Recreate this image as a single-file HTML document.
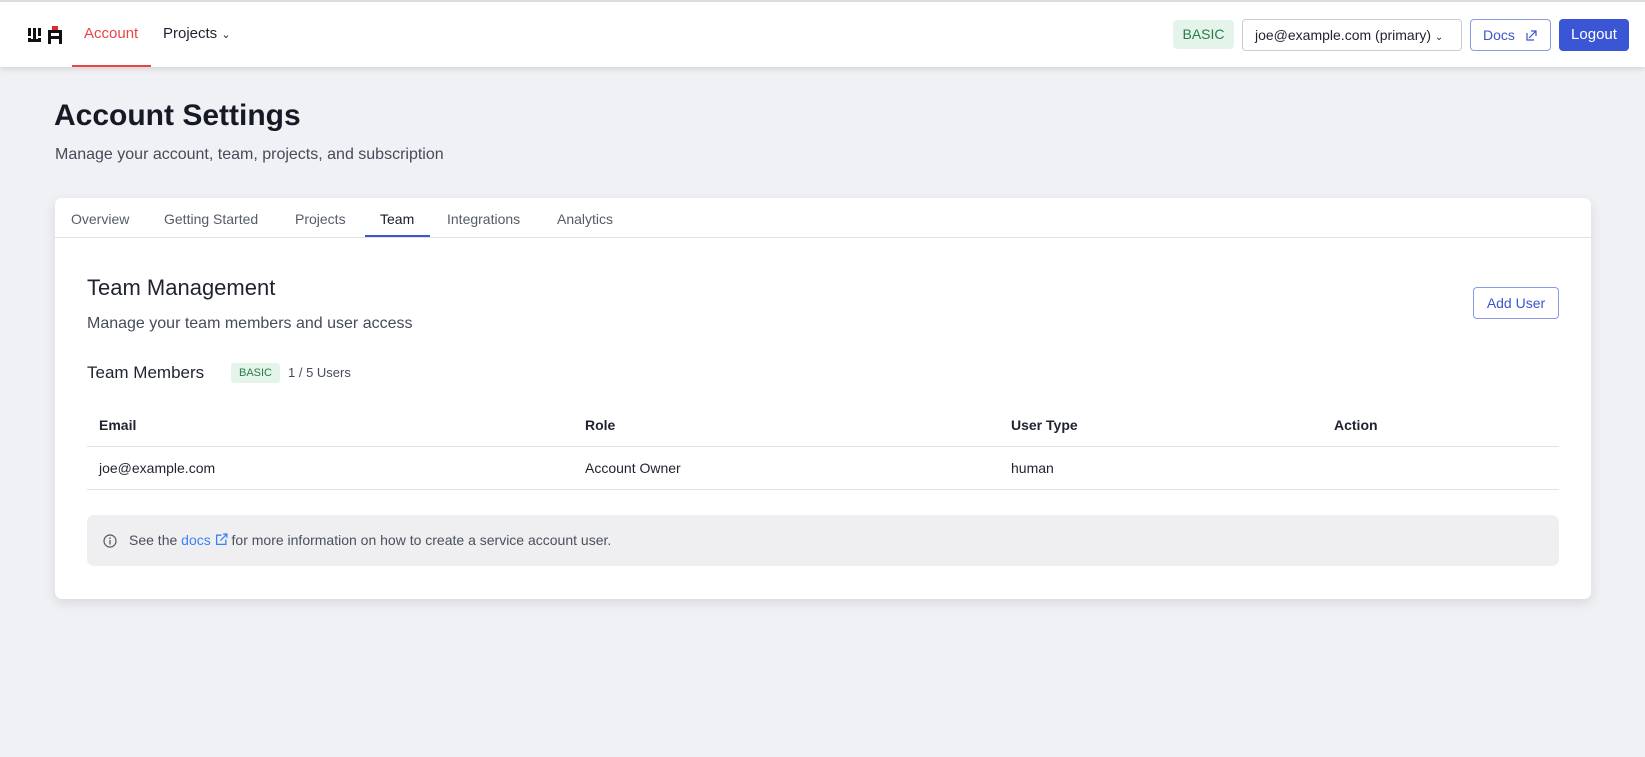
<!DOCTYPE html>
<html><head><meta charset="utf-8"><style>
*{box-sizing:border-box;margin:0;padding:0}
body{width:1645px;height:757px;background:#f0f1f4;font-family:"Liberation Sans",sans-serif;color:#1f2330;position:relative;overflow:hidden}
.abs{position:absolute}
header{position:absolute;left:0;top:0;width:1645px;height:67px;background:#fff;border-top:2px solid #dcdcdc;box-shadow:0 2px 5px rgba(0,0,0,.12)}
.t{position:absolute;white-space:nowrap}
.card{position:absolute;left:55px;top:198px;width:1536px;height:401px;background:#fff;border-radius:7px;box-shadow:0 4px 12px rgba(0,0,0,.1)}
</style></head><body>
<header>
<svg class="abs" style="left:27px;top:23px" width="36" height="20" viewBox="0 0 36 20">
<g fill="#111"><rect x="1" y="3" width="3" height="8"/><rect x="1" y="13" width="3" height="4"/><rect x="6" y="3" width="3" height="14"/><rect x="11" y="3" width="3" height="8"/><rect x="11" y="13" width="3" height="4"/><rect x="4" y="14" width="7" height="3"/>
<rect x="21" y="5" width="3" height="14"/><rect x="32" y="5" width="3" height="14"/><rect x="21" y="5" width="14" height="3"/><rect x="21" y="11" width="14" height="3"/></g>
<rect x="25" y="1" width="6" height="4" fill="#e8262e"/></svg>
<div class="t" style="left:84px;top:23px;font-size:15px;color:#e94545">Account</div>
<div class="abs" style="left:72px;top:63px;width:79px;height:2px;background:#e94545"></div>
<div class="t" style="left:163px;top:23px;font-size:15px;color:#1f2330">Projects <span style="font-size:11px">&#8964;</span></div>
<div class="t" style="left:1173px;top:18px;width:61px;height:29px;background:#e4f4ea;color:#2a7a4a;border-radius:4px;font-size:14px;line-height:29px;text-align:center">BASIC</div>
<div class="t" style="left:1242px;top:17px;width:220px;height:32px;border:1px solid #c9ccd3;border-radius:4px;font-size:14px;line-height:30px;padding-left:12px">joe@example.com (primary) <span style="font-size:10px">&#8964;</span></div>
<div class="t" style="left:1470px;top:17px;width:81px;height:32px;border:1px solid #8a9ae6;border-radius:4px;font-size:14px;line-height:30px;padding-left:12px;color:#3d55cc">Docs
<svg style="position:absolute;left:55px;top:9px" width="12" height="12" viewBox="0 0 12 12" fill="none" stroke="#3d55cc" stroke-width="1.2"><path d="M1 4V11H8M3 9L10 2M5 2H10V7"/></svg></div>
<div class="t" style="left:1559px;top:17px;width:70px;height:32px;background:#3a56d4;border-radius:4px;font-size:15px;line-height:32px;text-align:center;color:#fff">Logout</div>
</header>
<div class="t" style="left:54px;top:99px;font-size:30px;font-weight:bold;color:#151a26">Account Settings</div>
<div class="t" style="left:55px;top:146px;font-size:16px;color:#454b58">Manage your account, team, projects, and subscription</div>
<div class="card">
<div class="abs" style="left:0;top:39px;width:1536px;height:1px;background:#dfe1e6"></div>
<div class="t" style="left:16px;top:13px;font-size:14px;color:#555b67">Overview</div>
<div class="t" style="left:109px;top:13px;font-size:14px;color:#555b67">Getting Started</div>
<div class="t" style="left:240px;top:13px;font-size:14px;color:#555b67">Projects</div>
<div class="t" style="left:325px;top:13px;font-size:14px;color:#151a26">Team</div>
<div class="abs" style="left:310px;top:37px;width:65px;height:2px;background:#3a56d4"></div>
<div class="t" style="left:392px;top:13px;font-size:14px;color:#555b67">Integrations</div>
<div class="t" style="left:502px;top:13px;font-size:14px;color:#555b67">Analytics</div>
<div class="t" style="left:32px;top:77px;font-size:22px;color:#1f2330">Team Management</div>
<div class="t" style="left:32px;top:117px;font-size:16px;color:#454b58">Manage your team members and user access</div>
<div class="t" style="left:1418px;top:89px;width:86px;height:32px;border:1px solid #8a9ae6;border-radius:4px;font-size:14px;line-height:30px;text-align:center;color:#3d55cc">Add User</div>
<div class="t" style="left:32px;top:165px;font-size:17px;color:#1f2330">Team Members</div>
<div class="t" style="left:176px;top:165px;width:49px;height:20px;background:#e4f4ea;color:#2a7a4a;border-radius:3px;font-size:11px;line-height:20px;text-align:center">BASIC</div>
<div class="t" style="left:233px;top:167px;font-size:13px;color:#454b58">1 / 5 Users</div>
<div class="t" style="left:44px;top:219px;font-size:14px;font-weight:bold">Email</div>
<div class="t" style="left:530px;top:219px;font-size:14px;font-weight:bold">Role</div>
<div class="t" style="left:956px;top:219px;font-size:14px;font-weight:bold">User Type</div>
<div class="t" style="left:1279px;top:219px;font-size:14px;font-weight:bold">Action</div>
<div class="abs" style="left:32px;top:248px;width:1472px;height:1px;background:#dfe1e6"></div>
<div class="t" style="left:44px;top:262px;font-size:14px">joe@example.com</div>
<div class="t" style="left:530px;top:262px;font-size:14px">Account Owner</div>
<div class="t" style="left:956px;top:262px;font-size:14px">human</div>
<div class="abs" style="left:32px;top:291px;width:1472px;height:1px;background:#dfe1e6"></div>
<div class="abs" style="left:32px;top:317px;width:1472px;height:51px;background:#efeff1;border-radius:7px"></div>
<svg class="abs" style="left:48px;top:336px" width="14" height="14" viewBox="0 0 14 14"><circle cx="7" cy="7" r="6" fill="none" stroke="#555" stroke-width="1.2"/><rect x="6.4" y="6" width="1.2" height="4.5" fill="#555"/><circle cx="7" cy="4.2" r=".8" fill="#555"/></svg>
<div class="t" style="left:74px;top:334px;font-size:14px;color:#4a505c">See the <span style="color:#3b82f6">docs</span> <svg width="13" height="13" viewBox="0 0 12 12" fill="none" stroke="#3b82f6" stroke-width="1.2" style="vertical-align:-1px"><path d="M6 2H1.5V10.5H10V6M5 7L11 1M7.5 1H11V4.5"/></svg> for more information on how to create a service account user.</div>
</div>
</body></html>
